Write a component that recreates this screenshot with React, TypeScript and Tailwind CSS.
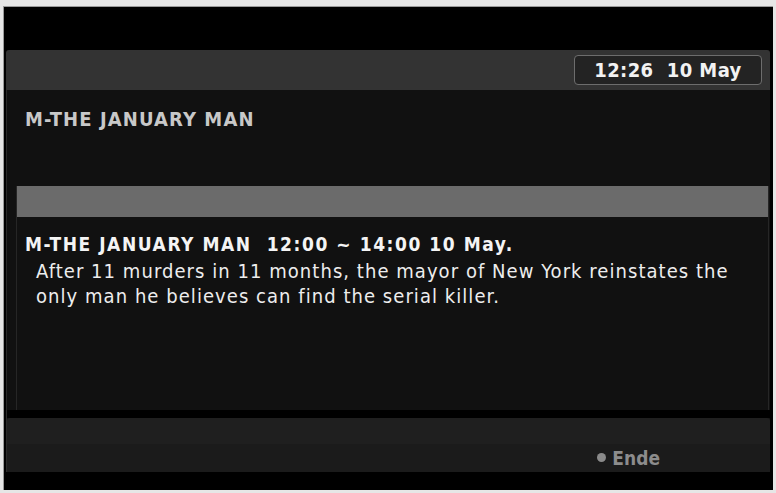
const font = { fontFamily: '"DejaVu Sans Condensed", "DejaVu Sans", sans-serif' };

export default function App() {
  return (
    <div className="w-[776px] h-[493px] bg-[#e6e6e6] pt-[6px] pl-[3px] pr-[3px] pb-[3px]" style={font}>
      <div className="h-full bg-black border-t border-l border-[#9a9a9a] flex flex-col pt-[43px] pb-[18px] pl-[2px] pr-[3px]">
        {/* top bar with clock */}
        <div className="h-[40px] bg-[#333333] rounded-t-[3px] flex items-center justify-end pr-[8px]">
          <div className="h-[30px] w-[188px] rounded-[4px] border border-[#6d6d6d] bg-[#232323] flex items-center justify-center text-[20px] font-bold text-[#f2f2f2] tracking-[0.4px]">
            12:26&nbsp;&nbsp;10 May
          </div>
        </div>

        {/* main area */}
        <div className="flex-1 bg-[#111111] border-l border-[#2a2a2a] flex flex-col">
          <div className="h-[96px] pl-[18px] pt-[14px] text-[20px] font-bold text-[#c8c8c8] tracking-[1.1px]">
            M-THE JANUARY MAN
          </div>
          <div className="ml-[9px] mr-[1px] flex-1 border-x border-[#262626] flex flex-col">
            <div className="h-[31px] bg-[#6b6b6b]" />
            <div className="pl-[8px] pt-[15px] text-[19px] font-bold text-[#f4f4f4] leading-[24px] tracking-[1.55px] whitespace-nowrap">
              M-THE JANUARY MAN&nbsp;&nbsp;12:00 ~ 14:00 10 May.
            </div>
            <div className="pl-[19px] pt-[3px] text-[20px] text-[#ededed] leading-[25px] tracking-[1.05px] whitespace-nowrap">
              After 11 murders in 11 months, the mayor of New York reinstates the
              <br />
              only man he believes can find the serial killer.
            </div>
          </div>
          <div className="h-[8px] bg-black" />
          {/* footer */}
          <div className="h-[54px] flex flex-col">
            <div className="h-[29px] bg-[#1f1f1f] rounded-t-[3px]" />
            <div className="flex-1 bg-[#1b1b1b] flex items-center justify-end pr-[110px]">
              <span className="w-[9px] h-[9px] rounded-full bg-[#8a8a8a] mr-[6px]" />
              <span className="text-[19px] font-bold text-[#8c8c8c]">Ende</span>
            </div>
          </div>
        </div>
      </div>
    </div>
  );
}
